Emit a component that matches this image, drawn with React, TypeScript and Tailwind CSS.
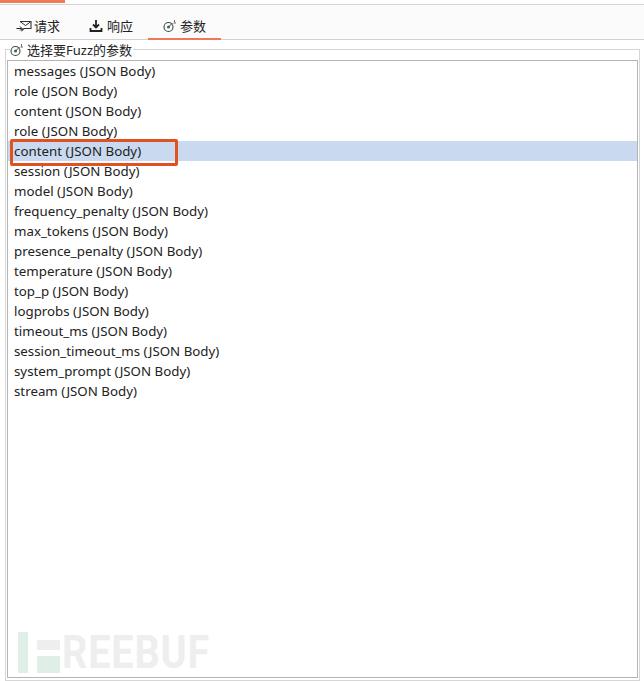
const rows = [
  "messages", "role", "content", "role", "content", "session", "model", "frequency_penalty", "max_tokens",
  "presence_penalty", "temperature", "top_p", "logprobs", "timeout_ms", "session_timeout_ms", "system_prompt", "stream",
];

function Target() {
  return (
    <svg width="14" height="14" viewBox="0 0 14 14" fill="none" className="shrink-0">
      <circle cx="5.5" cy="8" r="4.5" stroke="#444" strokeWidth="1.1" />
      <circle cx="5.5" cy="8" r="1.6" fill="#3a7d55" />
      <path d="M5.5 8 L9.5 4" stroke="#333" strokeWidth="0.9" />
      <path d="M11.5 1v2.5M13 4h-2.5" stroke="#666" strokeWidth="1" />
    </svg>
  );
}

export default function App() {
  return (
    <div className="relative w-[644px] h-[681px] overflow-hidden bg-white text-[13.3px] leading-5 text-[#222] font-['Noto_Sans','Noto_Sans_CJK_SC',sans-serif]">
      <div className="h-[5px] border-b border-[#d4d4d4]">
        <div className="h-[3px] w-[65px] bg-[#ee7a55]" />
      </div>
      <div className="flex h-[35px] items-stretch border-b border-[#d2d2d2] bg-[#fbfbfb] pl-[16px] text-[13px]">
        <div className="flex items-center gap-[1px] w-[73px] pt-[8px]">
          <svg width="17" height="14" viewBox="0 0 17 14" fill="none" className="shrink-0">
            <path d="M4 2.5h11v7H8l-2 2v-2" stroke="#333" strokeWidth="1.1" />
            <path d="M4 2.5l5.5 4 5.5-4" stroke="#333" strokeWidth="1" />
            <path d="M0.5 9.5h5M4 7.5l2 2-2 2" stroke="#222" strokeWidth="1" />
          </svg>
          <span>请求</span>
        </div>
        <div className="flex items-center gap-[4px] w-[59px] pt-[8px]">
          <svg width="14" height="14" viewBox="0 0 14 14" fill="none" className="shrink-0">
            <path d="M7 1v7M4 5.5L7 8.5l3-3" stroke="#222" strokeWidth="1.8" />
            <path d="M1.5 9v3h11V9" stroke="#222" strokeWidth="1.8" />
          </svg>
          <span>响应</span>
        </div>
        <div className="flex items-center gap-[3px] w-[73px] pl-[15px] pt-[8px] -mb-px border-b-[2px] border-[#ee7a55]">
          <Target />
          <span>参数</span>
        </div>
      </div>
      <div className="absolute left-[5px] right-[4px] top-[49px] bottom-0 border border-[#d6d6d6] px-[1px] pt-[10px] pb-[2px] flex">
        <div className="absolute left-[4px] -top-[9px] flex items-center gap-[3px] bg-white pr-[1px] h-[18px] text-[13px]">
          <Target />
          <span>选择要Fuzz的参数</span>
        </div>
        <div className="flex-1 border border-[#b4b4b4]">
          {rows.map((r, i) => (
            <div key={i} className={`h-5 pl-[6px] whitespace-nowrap ${i === 4 ? "bg-[#c9d9f0]" : ""}`}>
              {r} (JSON Body)
            </div>
          ))}
        </div>
      </div>
      <div className="absolute left-[10px] top-[139px] w-[168px] h-[27px] border-[3px] rounded-[2px] border-[#e0521f]" />
      <div className="absolute left-[18px] top-[632px] flex items-end">
        <svg width="44" height="41" viewBox="0 0 44 41" className="shrink-0">
          <rect x="0" y="0" width="10" height="41" fill="#e0eee8" />
          <rect x="19" y="8" width="23" height="10" fill="#eeeeee" />
          <rect x="19" y="24" width="23" height="17" fill="#e0eee8" />
        </svg>
        <span className="text-[46px] leading-[41px] h-[41px] font-bold tracking-[1px] text-[#eeeeee] font-['Roboto',sans-serif] origin-left scale-x-[0.86]">REEBUF</span>
      </div>
    </div>
  );
}
